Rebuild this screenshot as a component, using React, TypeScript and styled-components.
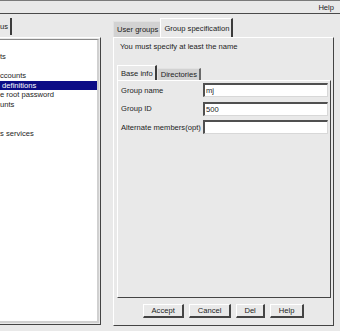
import styled, { createGlobalStyle } from "styled-components";

const Global = createGlobalStyle`
  html, body {
    margin: 0;
    padding: 0;
    background: #e9e9e9;
  }
`;

const Window = styled.div`
  width: 340px;
  height: 331px;
  overflow: hidden;
  display: flex;
  flex-direction: column;
  background: #e9e9e9;
  color: #1c1c1c;
  font-family: "Liberation Sans", Arial, sans-serif;
  font-size: 7.6px;
`;

const MenuBar = styled.div`
  height: 12px;
  border-top: 1px solid #7a7a7a;
  border-bottom: 1px solid #4a4a4a;
  display: flex;
  justify-content: flex-end;
  align-items: center;
  padding-right: 6px;
`;

const Body = styled.div`
  display: flex;
  padding-top: 4px;
`;

const Column = styled.div<{ $width: number }>`
  width: ${(p) => p.$width}px;
  display: flex;
  flex-direction: column;
`;

const TabRow = styled.div<{ $height: number }>`
  height: ${(p) => p.$height}px;
  display: flex;
  align-items: flex-end;
`;

const Tab = styled.div<{ $active?: boolean }>`
  box-sizing: border-box;
  height: ${(p) => (p.$active ? "100%" : "calc(100% - 3px)")};
  display: flex;
  align-items: center;
  padding: 0 2px 0 3px;
  background: ${(p) => (p.$active ? "#e9e9e9" : "#d2d2d2")};
  border-top: 1px solid ${(p) => (p.$active ? "#ffffff" : "#e2e2e2")};
  border-left: 1px solid ${(p) => (p.$active ? "#ffffff" : "#e2e2e2")};
  border-right: 2px solid ${(p) => (p.$active ? "#3c3c3c" : "#6a6a6a")};
  white-space: nowrap;
  position: relative;

  &:not(:first-child) {
    margin-left: ${(p) => (p.$active ? "-2px" : "0")};
  }
`;

const SideTab = styled(Tab)`
  height: 17px;
  margin-bottom: 2px;
  padding-left: 0;
  border-left: none;
  border-top: none;
`;

const Frame = styled.div<{ $height: number }>`
  box-sizing: border-box;
  height: ${(p) => p.$height}px;
  border-top: 1px solid #ffffff;
  border-left: 1px solid #ffffff;
  border-right: 1px solid #444444;
  border-bottom: 1px solid #444444;
  display: flex;
  flex-direction: column;
`;

const LeftFrame = styled(Frame)`
  border-left: none;
  padding: 1px 1px 1px 0;
`;

const ListBox = styled.div`
  flex: 1;
  background: #ffffff;
  border-top: 1px solid #8a8a8a;
  border-right: 2px solid #d0d0d0;
  border-bottom: 2px solid #d0d0d0;
  padding-top: 2px;
  overflow: hidden;
`;

const ListRow = styled.div<{ $selected?: boolean }>`
  height: 9.7px;
  line-height: 9.7px;
  white-space: pre;
  background: ${(p) => (p.$selected ? "#0c0c86" : "transparent")};
  color: ${(p) => (p.$selected ? "#ffffff" : "#1c1c1c")};
`;

const Message = styled.div`
  height: 10px;
  line-height: 10px;
  margin: 4px 0 0 6px;
`;

const InnerTabs = styled(TabRow)`
  margin: 13px 0 0 3px;
`;

const InnerFrame = styled(Frame)`
  margin: 0 2px 0 3px;
  padding: 2px 2px 0 3px;
  gap: 4.5px;
`;

const FieldRow = styled.div`
  height: 14px;
  display: flex;
  align-items: center;
`;

const Label = styled.div`
  width: 82px;
  white-space: nowrap;
`;

const Input = styled.div`
  box-sizing: border-box;
  flex: 1;
  height: 14px;
  background: #ffffff;
  border-top: 2px solid #505050;
  border-left: 2px solid #505050;
  border-right: 1px solid #d8d8d8;
  border-bottom: 1px solid #d8d8d8;
  padding-left: 1px;
  display: flex;
  align-items: center;
`;

const ButtonRow = styled.div`
  height: 14px;
  margin: 6px 0 7px;
  display: flex;
  justify-content: center;
  gap: 5px;
`;

const Button = styled.div`
  box-sizing: border-box;
  height: 14px;
  padding: 0 7.5px;
  display: flex;
  align-items: center;
  border-top: 1px solid #ffffff;
  border-left: 1px solid #ffffff;
  border-right: 2px solid #444444;
  border-bottom: 2px solid #444444;
`;

const listRows: { text: string; selected?: boolean }[] = [
  { text: "" },
  { text: "ts" },
  { text: "" },
  { text: "ccounts" },
  { text: " definitions", selected: true },
  { text: "e root password" },
  { text: "unts" },
  { text: "" },
  { text: "" },
  { text: "s services" },
];

const fields = [
  { label: "Group name", value: "mj" },
  { label: "Group ID", value: "500" },
  { label: "Alternate members(opt)", value: "" },
];

const App = () => {
  return (
    <>
      <Global />
      <Window>
        <MenuBar>Help</MenuBar>
        <Body>
          <Column $width={101} style={{ marginRight: 12 }}>
            <TabRow $height={19}>
              <SideTab $active>us</SideTab>
            </TabRow>
            <LeftFrame $height={288}>
              <ListBox>
                {listRows.map((r, i) => (
                  <ListRow key={i} $selected={r.selected}>
                    {r.text}
                  </ListRow>
                ))}
              </ListBox>
            </LeftFrame>
          </Column>
          <Column $width={221}>
            <TabRow $height={19}>
              <Tab>User groups</Tab>
              <Tab $active>Group specification</Tab>
            </TabRow>
            <Frame $height={289}>
              <Message>You must specify at least the name</Message>
              <InnerTabs $height={15}>
                <Tab $active>Base info</Tab>
                <Tab>Directories</Tab>
              </InnerTabs>
              <InnerFrame $height={218}>
                {fields.map((f) => (
                  <FieldRow key={f.label}>
                    <Label>{f.label}</Label>
                    <Input>{f.value}</Input>
                  </FieldRow>
                ))}
              </InnerFrame>
              <ButtonRow>
                <Button>Accept</Button>
                <Button>Cancel</Button>
                <Button>Del</Button>
                <Button>Help</Button>
              </ButtonRow>
            </Frame>
          </Column>
        </Body>
      </Window>
    </>
  );
};

export default App;
